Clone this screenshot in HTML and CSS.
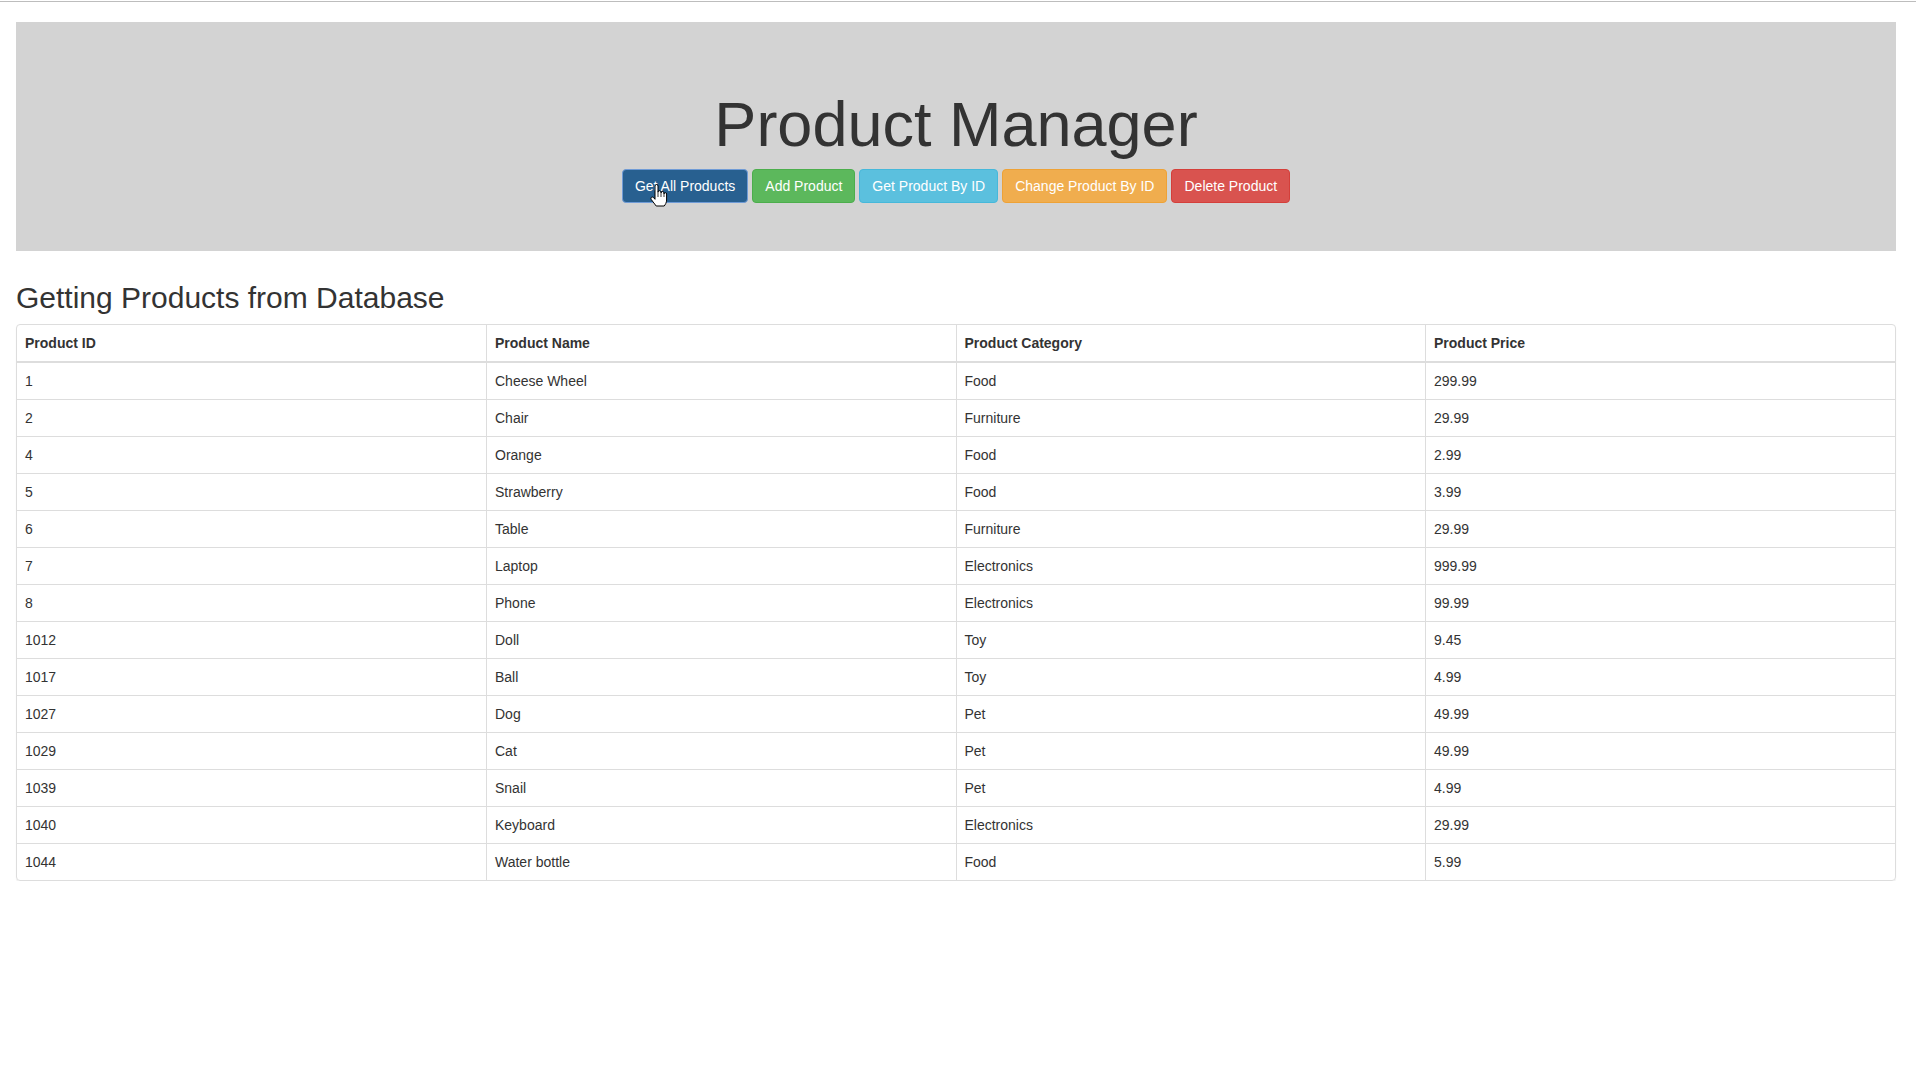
FILE: index.html
```html
<!DOCTYPE html>
<html lang="en">
<head>
<meta charset="utf-8">
<title>Product Manager</title>
<link rel="stylesheet" href="styles.css">
</head>
<body>
<div class="topline"></div>
<div class="page">
  <div class="jumbotron">
    <h1>Product Manager</h1>
    <div class="btn-row">
      <button class="btn btn-primary active">Get All Products</button>
      <button class="btn btn-success">Add Product</button>
      <button class="btn btn-info">Get Product By ID</button>
      <button class="btn btn-warning">Change Product By ID</button>
      <button class="btn btn-danger">Delete Product</button>
    </div>
  </div>

  <h2>Getting Products from Database</h2>
  <div class="panel">
    <table class="products">
      <thead>
        <tr><th>Product ID</th><th>Product Name</th><th>Product Category</th><th>Product Price</th></tr>
      </thead>
      <tbody>
        <tr><td>1</td><td>Cheese Wheel</td><td>Food</td><td>299.99</td></tr>
        <tr><td>2</td><td>Chair</td><td>Furniture</td><td>29.99</td></tr>
        <tr><td>4</td><td>Orange</td><td>Food</td><td>2.99</td></tr>
        <tr><td>5</td><td>Strawberry</td><td>Food</td><td>3.99</td></tr>
        <tr><td>6</td><td>Table</td><td>Furniture</td><td>29.99</td></tr>
        <tr><td>7</td><td>Laptop</td><td>Electronics</td><td>999.99</td></tr>
        <tr><td>8</td><td>Phone</td><td>Electronics</td><td>99.99</td></tr>
        <tr><td>1012</td><td>Doll</td><td>Toy</td><td>9.45</td></tr>
        <tr><td>1017</td><td>Ball</td><td>Toy</td><td>4.99</td></tr>
        <tr><td>1027</td><td>Dog</td><td>Pet</td><td>49.99</td></tr>
        <tr><td>1029</td><td>Cat</td><td>Pet</td><td>49.99</td></tr>
        <tr><td>1039</td><td>Snail</td><td>Pet</td><td>4.99</td></tr>
        <tr><td>1040</td><td>Keyboard</td><td>Electronics</td><td>29.99</td></tr>
        <tr><td>1044</td><td>Water bottle</td><td>Food</td><td>5.99</td></tr>
      </tbody>
    </table>
  </div>
</div>

<svg class="cursor" width="18" height="24" viewBox="0 0 18 24" xmlns="http://www.w3.org/2000/svg">
  <path d="M6.5 0.5 a1.5 1.5 0 0 1 1.5 1.5 V8.2 a1.5 1.5 0 0 1 3 0 V9 a1.5 1.5 0 0 1 3 0 V10 a1.3 1.3 0 0 1 2.6 0 V16 c0 2.6 -1.3 4.6 -2.4 6 H6.2 L1.3 15.6 c-0.8 -1.1 -0.2 -2.6 1 -2.6 c0.6 0 1.1 0.3 1.5 0.8 L5 15.3 V2 a1.5 1.5 0 0 1 1.5 -1.5 Z" fill="#fff" stroke="#000" stroke-width="1" stroke-linejoin="round"/>
  <path d="M8 8.2 V13 M11 9 V13 M14 10 V13" stroke="#000" stroke-width="0.8" fill="none"/>
</svg>
</body>
</html>
```

FILE: styles.css
```css
html, body {
  margin: 0;
  padding: 0;
  background: #fff;
}

body {
  font-family: "Liberation Sans", Arial, Helvetica, sans-serif;
  font-size: 14px;
  line-height: 1.42857;
  color: #333;
}

.topline {
  height: 1px;
  margin-top: 1px;
  background: #bdbdbd;
}

.page {
  margin: 0 20px 0 16px;
}

.jumbotron {
  margin-top: 20px;
  margin-bottom: 30px;
  padding: 48px 0;
  background: #d3d3d3;
  text-align: center;
}

.jumbotron h1 {
  margin: 20px 0 10px;
  font-size: 63px;
  line-height: 1.1;
  font-weight: normal;
  color: #333;
}

.btn-row {
  display: flex;
  justify-content: center;
  gap: 4px;
}

.btn {
  font-family: "Liberation Sans", Arial, Helvetica, sans-serif;
  font-size: 14px;
  line-height: 20px;
  padding: 6px 12px;
  border: 1px solid transparent;
  border-radius: 4px;
  color: #fff;
  cursor: pointer;
}

.btn-primary { background: #337ab7; border-color: #2e6da4; }
.btn-primary.active { background: #286090; border-color: #6f9bd6; }
.btn-success { background: #5cb85c; border-color: #4cae4c; }
.btn-info { background: #5bc0de; border-color: #46b8da; }
.btn-warning { background: #f0ad4e; border-color: #eea236; }
.btn-danger { background: #d9534f; border-color: #d43f3a; }

h2 {
  margin: 20px 0 10px;
  font-size: 30px;
  line-height: 1.1;
  font-weight: normal;
  color: #333;
}

.panel {
  border: 1px solid #ddd;
  border-radius: 4px;
  box-shadow: 0 1px 1px rgba(0, 0, 0, 0.08);
  overflow: hidden;
}

.products {
  width: 100%;
  border-collapse: collapse;
  table-layout: fixed;
}

.products th,
.products td {
  padding: 8px;
  font-size: 14px;
  line-height: 20px;
  text-align: left;
  vertical-align: top;
  color: #333;
}

.products th {
  font-weight: bold;
  border-bottom: 2px solid #ddd;
}

.products th + th,
.products td + td {
  border-left: 1px solid #ddd;
}

.products tbody tr + tr td {
  border-top: 1px solid #ddd;
}

.cursor {
  position: absolute;
  left: 650px;
  top: 184px;
  pointer-events: none;
}
```
